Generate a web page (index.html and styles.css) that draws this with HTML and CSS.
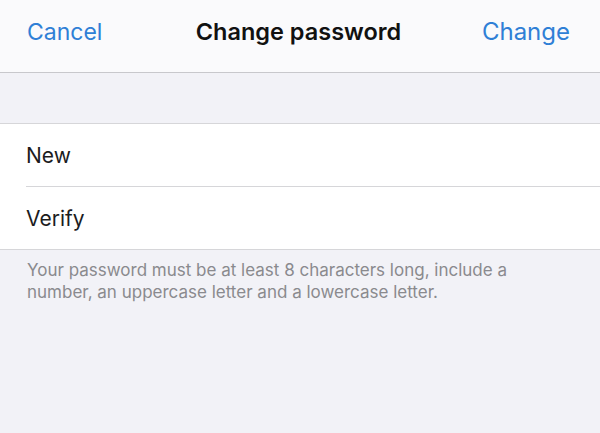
FILE: index.html
```html
<!DOCTYPE html>
<html lang="en">
  <head>
    <meta charset="UTF-8" />
    <meta name="viewport" content="width=device-width, initial-scale=1.0" />
    <title>Change password</title>
    <link rel="stylesheet" href="styles.css">
  </head>
  <body>
    <div class="navbar">
      <button type="button" class="nav_btn">Cancel</button>
      <div class="nav_title">Change password</div>
      <button type="button" class="nav_btn nav_right">Change</button>
    </div>
    <div class="spacer"></div>
    <div class="group">
      <div class="row">
        <input type="password" class="field" placeholder="New" />
      </div>
      <div class="row">
        <input type="password" class="field" placeholder="Verify" />
      </div>
    </div>
    <div class="footer_note">
      Your password must be at least 8 characters long, include a
      number, an uppercase letter and a lowercase letter.
    </div>
  </body>
</html>
```

FILE: styles.css
```css
body {
  margin: 0;
  background: #f2f2f7;
  font-family: Inter, "Liberation Sans", sans-serif;
}
.navbar {
  display: grid;
  grid-template-columns: 1fr auto 1fr;
  align-items: center;
  height: 73px;
  padding: 0 30px 9px 27px;
  background: #fafafc;
  border-bottom: 1px solid #c8c8cc;
  box-sizing: border-box;
}
.nav_btn {
  justify-self: start;
  border: none;
  background: none;
  padding: 0;
  font-family: inherit;
  font-size: 23px;
  color: #2f7fd6;
}
.nav_right {
  justify-self: end;
  font-size: 24px;
}
.nav_title {
  font-size: 23.5px;
  font-weight: 600;
  color: #111;
}
.spacer {
  height: 50px;
}
.group {
  background: #fff;
  border-top: 1px solid #d6d6d9;
  border-bottom: 1px solid #d6d6d9;
  padding-left: 26px;
}
.row {
  display: flex;
  align-items: center;
  height: 62px;
}
.row + .row {
  border-top: 1px solid #d6d6d9;
}
.field {
  flex: 1;
  border: none;
  outline: none;
  background: none;
  padding: 0;
  font-family: inherit;
  font-size: 21px;
}
.field::placeholder {
  color: #1c1c1e;
}
.footer_note {
  max-width: 520px;
  padding: 9px 27px 0;
  font-size: 17px;
  line-height: 22px;
  color: #8a8a8e;
}
```
